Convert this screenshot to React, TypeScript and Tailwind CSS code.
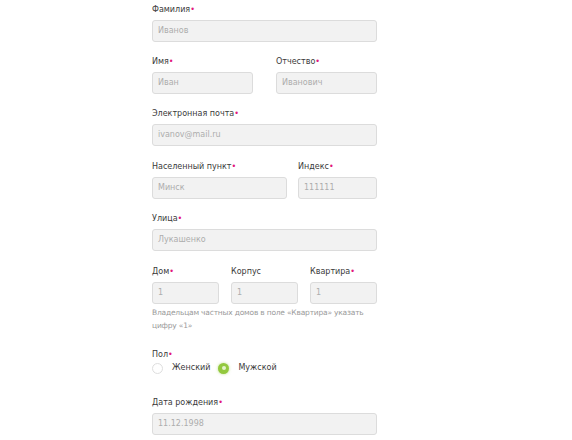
import React from 'react';

const font = "font-['DejaVu_Sans',sans-serif]";

function Label({ text, required = true }: { text: string; required?: boolean }) {
  return (
    <div className="h-[12px] text-[8px] leading-[12px] text-[#3a3a3a] whitespace-nowrap">
      {text}
      {required && <span className="text-[#e2187b]">•</span>}
    </div>
  );
}

function Input({ value }: { value: string }) {
  return (
    <div className="h-[22px] rounded-[3px] border border-[#dcdcdc] bg-[#f2f2f2] px-[5px] text-[8px] leading-[20px] text-[#adadad]">
      {value}
    </div>
  );
}

function Field({ label, value, required = true }: { label: string; value: string; required?: boolean }) {
  return (
    <div className="flex flex-col gap-[4px]">
      <Label text={label} required={required} />
      <Input value={value} />
    </div>
  );
}

function Radio({ label, checked }: { label: string; checked?: boolean }) {
  return (
    <div className="flex items-center gap-[9px]">
      {checked ? (
        <span className="flex h-[11px] w-[11px] items-center justify-center rounded-full bg-[#93c83e] shadow-[0_0_3px_rgba(147,200,62,0.6)]">
          <span className="h-[4px] w-[4px] rounded-full bg-[#e4f3cc]" />
        </span>
      ) : (
        <span className="h-[11px] w-[11px] rounded-full border border-[#dedede] bg-white" />
      )}
      <span className="text-[8px] leading-[12px] text-[#3a3a3a]">{label}</span>
    </div>
  );
}

export default function App() {
  return (
    <div className={`h-[440px] w-[572px] overflow-hidden bg-white ${font}`}>
      <div className="ml-[152px] flex w-[225px] flex-col pt-[4px]">
        <Field label="Фамилия" value="Иванов" />

        <div className="mt-[14px] grid grid-cols-[101px_101px] justify-between">
          <Field label="Имя" value="Иван" />
          <Field label="Отчество" value="Иванович" />
        </div>

        <div className="mt-[14px]">
          <Field label="Электронная почта" value="ivanov@mail.ru" />
        </div>

        <div className="mt-[15px] grid grid-cols-[135px_79px] justify-between">
          <Field label="Населенный пункт" value="Минск" />
          <Field label="Индекс" value="111111" />
        </div>

        <div className="mt-[14px]">
          <Field label="Улица" value="Лукашенко" />
        </div>

        <div className="mt-[15px] grid grid-cols-[67px_67px_67px] justify-between">
          <Field label="Дом" value="1" />
          <Field label="Корпус" value="1" required={false} />
          <Field label="Квартира" value="1" />
        </div>

        <p className="mt-[2px] text-[7.5px] leading-[13px] tracking-[-0.2px] text-[#9a9a9a]">
          Владельцам частных домов в поле «Квартира» указать цифру «1»
        </p>

        <div className="mt-[17px]">
          <Label text="Пол" />
          <div className="mt-[1px] flex items-center gap-[8px]">
            <Radio label="Женский" />
            <Radio label="Мужской" checked />
          </div>
        </div>

        <div className="mt-[23px]">
          <Field label="Дата рождения" value="11.12.1998" />
        </div>
      </div>
    </div>
  );
}
